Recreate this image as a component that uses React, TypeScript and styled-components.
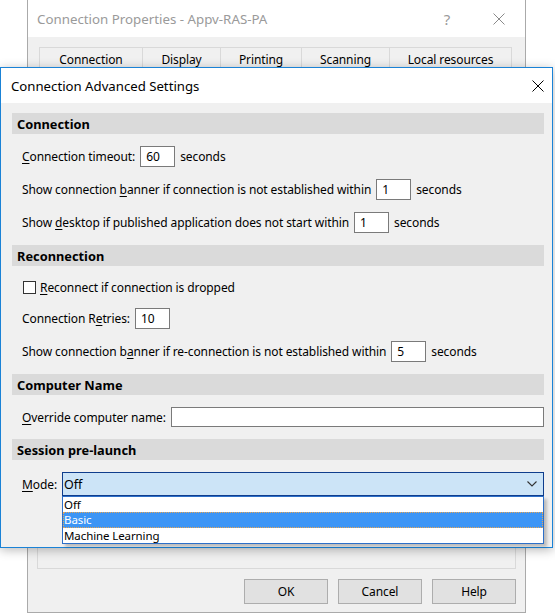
import React from "react";
import styled, { createGlobalStyle } from "styled-components";

const Global = createGlobalStyle`
  html, body { margin: 0; padding: 0; background: #ffffff; }
  #root { width: 555px; height: 613px; overflow: hidden; }
`;

const Desktop = styled.div`
  position: relative;
  width: 555px;
  height: 613px;
  overflow: hidden;
  background: #ffffff;
  font-family: "Noto Sans", "Segoe UI", sans-serif;
  font-size: 12px;
  letter-spacing: -0.1px;
  color: #000;
`;

/* ---------- background window ---------- */
const BackWindow = styled.div`
  position: absolute;
  left: 27px;
  top: -1px;
  width: 499px;
  height: 614px;
  box-sizing: border-box;
  border: 1px solid #aaaaaa;
  background: #f0f0f0;
  display: flex;
  flex-direction: column;
`;

const BackTitleBar = styled.div`
  height: 37px;
  flex-shrink: 0;
  background: #ffffff;
  display: flex;
  align-items: center;
  padding-left: 9px;
`;

const BackTitle = styled.div`
  flex: 1;
  color: #9a9a9a;
  font-size: 13.3px;
  letter-spacing: 0;
`;

const CaptionButton = styled.div`
  width: 52px;
  height: 37px;
  display: flex;
  align-items: center;
  justify-content: center;
  color: #9a9a9a;
  font-size: 15px;
`;

const BackBody = styled.div`
  flex: 1;
  display: flex;
  flex-direction: column;
  padding: 10px 9px 8px 9px;
`;

const TabStrip = styled.div`
  display: flex;
  padding-left: 2px;
  height: 22px;
`;

const Tab = styled.div<{ $w: number }>`
  width: ${(p) => p.$w}px;
  box-sizing: border-box;
  border: 1px solid #d9d9d9;
  border-right: none;
  border-bottom: none;
  background: #f0f0f0;
  display: flex;
  align-items: center;
  justify-content: center;
  padding-top: 1px;
  &:last-child { border-right: 1px solid #d9d9d9; }
`;

const TabPage = styled.div`
  flex: 1;
  border: 1px solid #d9d9d9;
  background: #f0f0f0;
`;

const ButtonRow = styled.div`
  display: flex;
  justify-content: flex-end;
  gap: 10px;
  margin-top: 10px;
`;

const PushButton = styled.div`
  width: 84px;
  height: 25px;
  box-sizing: border-box;
  border: 1px solid #adadad;
  background: #e1e1e1;
  display: flex;
  align-items: center;
  justify-content: center;
`;

/* ---------- dialog ---------- */
const Dialog = styled.div`
  position: absolute;
  left: 0;
  top: 67px;
  width: 553px;
  height: 481px;
  box-sizing: border-box;
  border: 1px solid #1a82d6;
  background: #f0f0f0;
  box-shadow: 0 2px 10px rgba(0, 0, 0, 0.28);
  display: flex;
  flex-direction: column;
`;

const TitleBar = styled.div`
  height: 35px;
  flex-shrink: 0;
  background: #ffffff;
  display: flex;
  align-items: center;
  padding-left: 10px;
`;

const Title = styled.div`
  flex: 1;
  font-size: 13.2px;
  letter-spacing: 0;
`;

const CloseBox = styled.div`
  width: 29px;
  height: 35px;
  display: flex;
  align-items: center;
  justify-content: center;
`;

const Body = styled.div`
  padding: 10px 8px 0 11px;
  display: flex;
  flex-direction: column;
`;

const Band = styled.div`
  height: 21px;
  background: #dadada;
  display: flex;
  align-items: center;
  padding-left: 5px;
  font-weight: 700;
  font-size: 12.8px;
  letter-spacing: 0;
`;

const SectionBody = styled.div`
  display: flex;
  flex-direction: column;
  gap: 12px;
  padding: 12px 0 12px 10px;
`;

const Row = styled.div<{ $h?: number }>`
  height: ${(p) => p.$h ?? 21}px;
  display: flex;
  align-items: center;
  gap: 5px;
  white-space: nowrap;
  position: relative;
`;

const Key = styled.span`
  text-decoration: underline;
  text-underline-offset: 2px;
`;

const NumBox = styled.input<{ $w?: number; $grow?: boolean; $h?: number }>`
  width: ${(p) => (p.$w ? `${p.$w}px` : "auto")};
  ${(p) => (p.$grow ? "flex: 1; min-width: 0;" : "")}
  height: ${(p) => p.$h ?? 21}px;
  box-sizing: border-box;
  border: 1px solid #7a7a7a;
  background: #ffffff;
  padding: 0 5px;
  margin: 0;
  font: inherit;
  letter-spacing: inherit;
  color: #000;
  outline: none;
`;

const CheckLabel = styled.div`
  display: flex;
  align-items: center;
  gap: 4px;
  margin-left: 1px;
`;

const CheckBox = styled.div`
  width: 13px;
  height: 13px;
  box-sizing: border-box;
  border: 1px solid #333333;
  background: #ffffff;
`;

const Combo = styled.div`
  flex: 1;
  height: 24px;
  box-sizing: border-box;
  border: 1px solid #0f3d8c;
  background: #cce4f7;
  display: flex;
  align-items: center;
  padding: 0 6px 0 1px;
  position: relative;
  font-size: 12.5px;
`;

const ComboText = styled.div`
  flex: 1;
`;

const DropList = styled.div`
  position: absolute;
  top: calc(100% + 1px);
  left: -1px;
  right: -1px;
  background: #ffffff;
  border: 1px solid #2d6fc8;
  box-shadow: 3px 3px 3px rgba(0, 0, 0, 0.22);
  display: flex;
  flex-direction: column;
  z-index: 2;
`;

const DropItem = styled.div<{ $sel?: boolean }>`
  height: 15.4px;
  line-height: 15.4px;
  font-size: 11.5px;
  padding-left: 1px;
  box-sizing: border-box;
  overflow: hidden;
  background: ${(p) => (p.$sel ? "#3d95f5" : "#ffffff")};
  color: ${(p) => (p.$sel ? "#ffffff" : "#000000")};
  outline: ${(p) => (p.$sel ? "1px dotted #e8a552" : "none")};
  outline-offset: -1px;
`;

const XIcon = ({ color, size }: { color: string; size: number }) => (
  <svg width={size} height={size} viewBox="0 0 12 12">
    <path d="M0.5 0.5 L11.5 11.5 M11.5 0.5 L0.5 11.5" stroke={color} strokeWidth="1" fill="none" />
  </svg>
);

const Chevron = () => (
  <svg width="10" height="6" viewBox="0 0 10 6">
    <path d="M0.5 0.5 L5 5 L9.5 0.5" stroke="#333" strokeWidth="1.1" fill="none" />
  </svg>
);

export default function App() {
  return (
    <Desktop>
      <Global />
      <BackWindow>
        <BackTitleBar>
          <BackTitle>Connection Properties - Appv-RAS-PA</BackTitle>
          <CaptionButton>?</CaptionButton>
          <CaptionButton>
            <XIcon color="#8a8a8a" size={12} />
          </CaptionButton>
        </BackTitleBar>
        <BackBody>
          <TabStrip>
            <Tab $w={103}>Connection</Tab>
            <Tab $w={78}>Display</Tab>
            <Tab $w={81}>Printing</Tab>
            <Tab $w={88}>Scanning</Tab>
            <Tab $w={123}>Local resources</Tab>
          </TabStrip>
          <TabPage />
          <ButtonRow>
            <PushButton>OK</PushButton>
            <PushButton>Cancel</PushButton>
            <PushButton>Help</PushButton>
          </ButtonRow>
        </BackBody>
      </BackWindow>

      <Dialog>
        <TitleBar>
          <Title>Connection Advanced Settings</Title>
          <CloseBox>
            <XIcon color="#000" size={12} />
          </CloseBox>
        </TitleBar>
        <Body>
          <Band>Connection</Band>
          <SectionBody>
            <Row>
              <span>
                <Key>C</Key>onnection timeout:
              </span>
              <NumBox $w={35} defaultValue="60" readOnly />
              <span>seconds</span>
            </Row>
            <Row>
              <span>
                Show connection <Key>b</Key>anner if connection is not established within
              </span>
              <NumBox $w={35} defaultValue="1" readOnly />
              <span>seconds</span>
            </Row>
            <Row>
              <span>
                Show <Key>d</Key>esktop if published application does not start within
              </span>
              <NumBox $w={35} defaultValue="1" readOnly />
              <span>seconds</span>
            </Row>
          </SectionBody>

          <Band>Reconnection</Band>
          <SectionBody>
            <Row $h={18}>
              <CheckLabel>
                <CheckBox />
                <span>
                  <Key>R</Key>econnect if connection is dropped
                </span>
              </CheckLabel>
            </Row>
            <Row>
              <span>
                Connection R<Key>e</Key>tries:
              </span>
              <NumBox $w={35} defaultValue="10" readOnly />
            </Row>
            <Row>
              <span>
                Show connection b<Key>a</Key>nner if re-connection is not established within
              </span>
              <NumBox $w={35} defaultValue="5" readOnly />
              <span>seconds</span>
            </Row>
          </SectionBody>

          <Band>Computer Name</Band>
          <SectionBody>
            <Row $h={20}>
              <span>
                <Key>O</Key>verride computer name:
              </span>
              <NumBox $grow $h={20} defaultValue="" readOnly />
            </Row>
          </SectionBody>

          <Band>Session pre-launch</Band>
          <SectionBody>
            <Row $h={24}>
              <span>
                <Key>M</Key>ode:
              </span>
              <Combo>
                <ComboText>Off</ComboText>
                <Chevron />
                <DropList>
                  <DropItem>Off</DropItem>
                  <DropItem $sel>Basic</DropItem>
                  <DropItem>Machine Learning</DropItem>
                </DropList>
              </Combo>
            </Row>
          </SectionBody>
        </Body>
      </Dialog>
    </Desktop>
  );
}
